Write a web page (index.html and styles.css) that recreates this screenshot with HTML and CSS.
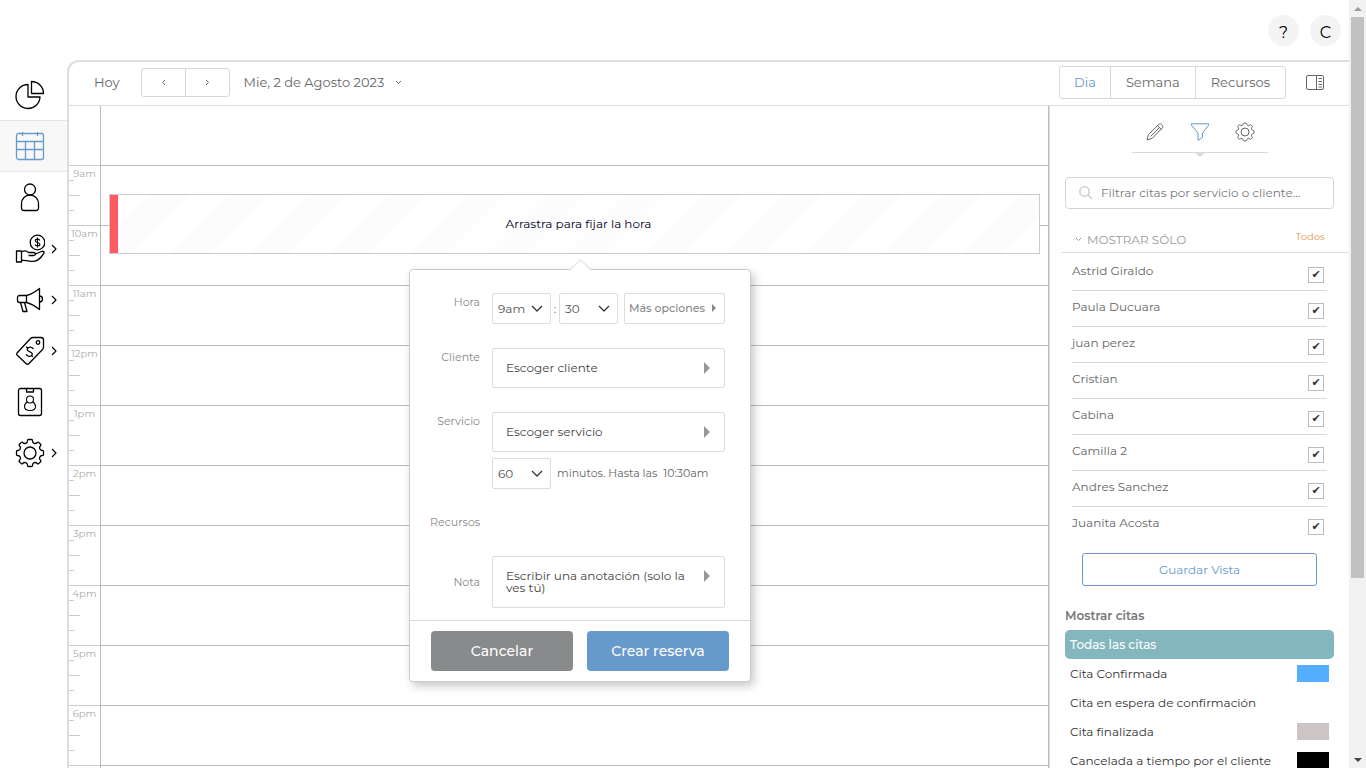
FILE: index.html
```html
<!DOCTYPE html>
<html lang="es">
<head>
<meta charset="utf-8">
<title>Agenda</title>
<link rel="stylesheet" href="styles.css">
</head>
<body>
<div class="app">
  <div class="page">
    <header class="topbar">
      <button class="round" type="button" aria-label="Ayuda">?</button>
      <button class="round" type="button" aria-label="Cuenta">C</button>
    </header>
    <div class="shell">
      <nav class="sidebar" aria-label="Principal">
        <a class="nav-item" href="#" aria-label="Informes"><svg viewBox="0 0 30 30"><path d="M13 4.500A12 12 0 1 0 25 17H13z"/><path d="M16.500 1.500A12 12 0 0 1 28.500 13.500H16.500z"/></svg></a>
        <a class="nav-item active" href="#" aria-label="Agenda"><svg viewBox="0 0 30 30"><rect x="1.500" y="2.500" width="27" height="26" rx="2"/><path d="M1.500 10.500H28.500M1.500 18.500H28.500M10.500 10.500V28M19.500 10.500V28M7.500 1V5M22.500 1V5"/></svg></a>
        <a class="nav-item" href="#" aria-label="Clientes"><svg viewBox="0 0 30 30"><circle cx="15" cy="6.500" r="5.500"/><path d="M6.500 25V20.500a8.500 8.500 0 0 1 17 0V25a2.500 2.500 0 0 1-2.500 2.500H9A2.500 2.500 0 0 1 6.500 25z"/></svg></a>
        <a class="nav-item" href="#" aria-label="Ventas"><svg viewBox="0 0 30 30"><circle cx="22.500" cy="8.500" r="7.300"/><path class="fine" d="M24.800 6.500c-.3-1-1.100-1.400-2.300-1.400-1.300 0-2.200.6-2.200 1.600 0 2.400 4.600 1.200 4.600 3.500 0 1-.9 1.700-2.400 1.700-1.300 0-2.200-.5-2.500-1.500M22.500 3.500v10"/><path d="M1.500 17h5v11H1.500zM6.500 18c2.500-1.500 5-1.500 7 .5h5c2.500 0 2.500 3 0 3h-5M20.500 20l6-2.500c2-.8 3.300.8 2 2.300-3 4.500-5.500 7.500-10.500 7.500-4.500 0-7-1.500-11.500-.8"/></svg><svg class="more" viewBox="0 0 6 10"><path d="M1 1l4 4-4 4"/></svg></a>
        <a class="nav-item" href="#" aria-label="Marketing"><svg viewBox="0 0 30 30"><path d="M11.500 10.500H4.500a2 2 0 0 0-2 2v3a2 2 0 0 0 2 2h7z"/><path d="M11.500 10.500C16 9.500 20 7 24.500 3.500V24.500C20 21 16 18.500 11.500 17.500M24.500 11c4 0 4 6 0 6M5.500 17.500 8 26.500h4L9.500 17.500"/></svg><svg class="more" viewBox="0 0 6 10"><path d="M1 1l4 4-4 4"/></svg></a>
        <a class="nav-item" href="#" aria-label="Promociones"><svg viewBox="0 0 30 30"><path d="M2 17 15.500 2.500Q16.500 1.500 18 1.500H26Q28.500 1.500 28.500 4V11Q28.500 12.500 27.500 13.500L14 27.500Q12.500 29 11 27.500L2 19Q1 18 2 17z"/><circle cx="23" cy="6.500" r="1.800"/><path d="M18.500 13c-1.500-2.500-4.500-2.500-6-.5-2 3 6.500 3.500 4.500 6.500-1.300 2-4.500 1.700-6-.6M11.500 10.500l1 2M16.500 19l1.200 2"/></svg><svg class="more" viewBox="0 0 6 10"><path d="M1 1l4 4-4 4"/></svg></a>
        <a class="nav-item" href="#" aria-label="Personal"><svg viewBox="0 0 30 30"><rect x="3.500" y="1.500" width="23" height="27" rx="2"/><path d="M11.500 2v3h7V2"/><circle class="fine" cx="15" cy="12.500" r="3.500"/><path class="fine" d="M12.500 15a5 5 0 0 0-3 4.500c0 3 2 4 5.500 4s5.500-1 5.500-4a5 5 0 0 0-3-4.500"/></svg></a>
        <a class="nav-item" href="#" aria-label="Ajustes"><svg viewBox="0 0 30 30"><use href="#gear"/></svg><svg class="more" viewBox="0 0 6 10"><path d="M1 1l4 4-4 4"/></svg></a>
      </nav>
      <main class="main">
        <div class="toolbar">
          <button class="plain" type="button">Hoy</button>
          <div class="group arrows">
            <button type="button" aria-label="Anterior"><svg viewBox="0 0 5 7"><path d="M4 1 1.500 3.500 4 6"/></svg></button>
            <button type="button" aria-label="Siguiente"><svg viewBox="0 0 5 7"><path d="M1 1l2.500 2.500L1 6"/></svg></button>
          </div>
          <button class="plain date" type="button">Mie, 2 de Agosto 2023 <svg viewBox="0 0 7 5"><path d="M1 1l2.500 2.500L6 1"/></svg></button>
          <div class="group views">
            <button class="on" type="button">Dia</button>
            <button type="button">Semana</button>
            <button type="button">Recursos</button>
          </div>
          <button class="plain panel-toggle" type="button" aria-label="Panel"><svg viewBox="0 0 18 16"><rect x=".5" y="1.500" width="17" height="14" rx="1.500"/><path d="M10.500 1.500V15.500M12.500 4.500H16M12.500 7.500H16M12.500 10.500H16M12.500 13H16"/></svg></button>
        </div>
        <div class="content">
          <section class="calendar" aria-label="Agenda del día">
            <div class="hours">
              <div class="hour blank"></div>
              <div class="hour">9am</div>
              <div class="hour">10am</div>
              <div class="hour">11am</div>
              <div class="hour">12pm</div>
              <div class="hour">1pm</div>
              <div class="hour">2pm</div>
              <div class="hour">3pm</div>
              <div class="hour">4pm</div>
              <div class="hour">5pm</div>
              <div class="hour">6pm</div>
            </div>
            <div class="slots">
              <div class="event">Arrastra para fijar la hora</div>
              <form class="popover">
                <div class="fields">
                  <label for="hora">Hora</label>
                  <div class="line">
                    <span class="pick"><select id="hora"><option>9am</option></select><svg viewBox="0 0 12 8"><path d="M1 1l5 5 5-5"/></svg></span>
                    <span class="colon">:</span>
                    <span class="pick"><select aria-label="Minutos"><option>30</option></select><svg viewBox="0 0 12 8"><path d="M1 1l5 5 5-5"/></svg></span>
                    <button class="options" type="button">Más opciones <i class="tri"></i></button>
                  </div>
                  <label for="cliente">Cliente</label>
                  <button class="chooser" id="cliente" type="button"><span>Escoger cliente</span><i class="tri big"></i></button>
                  <label for="servicio">Servicio</label>
                  <div class="service">
                    <button class="chooser" id="servicio" type="button"><span>Escoger servicio</span><i class="tri big"></i></button>
                    <div class="line">
                      <span class="pick"><select aria-label="Duración"><option>60</option></select><svg viewBox="0 0 12 8"><path d="M1 1l5 5 5-5"/></svg></span>
                      <span class="until">minutos. Hasta las &nbsp;10:30am</span>
                    </div>
                  </div>
                  <span class="name">Recursos</span>
                  <div></div>
                  <label class="middle" for="nota">Nota</label>
                  <button class="chooser note" id="nota" type="button"><span>Escribir una anotación (solo la ves tú)</span><i class="tri big"></i></button>
                </div>
                <div class="actions">
                  <button class="cancel" type="button">Cancelar</button>
                  <button class="create" type="button">Crear reserva</button>
                </div>
              </form>
            </div>
          </section>
          <aside class="panel">
            <div class="tabs">
              <button type="button" aria-label="Editar"><svg viewBox="0 0 20 20"><path d="M2 18l1.500-5.500L14 2.200c1.500-1.500 5 1.800 3.600 3.500L7.200 16.300zM12.500 3.700l3.700 3.800M5.500 14.500l8.800-8.800"/></svg></button>
              <button class="on" type="button" aria-label="Filtrar"><svg viewBox="0 0 20 20"><path d="M1.500 1.800h17v1.500L12.500 11v4.500L8 18.300V11L1.500 3.300z"/></svg></button>
              <button type="button" aria-label="Configurar"><svg viewBox="0 0 30 30"><use href="#gear"/></svg></button>
            </div>
            <label class="search"><svg viewBox="0 0 14 14"><circle cx="5.500" cy="5.500" r="4.700"/><path d="M9 9l4 4"/></svg><input type="text" aria-label="Filtrar citas" placeholder="Filtrar citas por servicio o cliente..."></label>
            <div class="only">
              <h2><svg viewBox="0 0 7 5"><path d="M1 1l2.500 2.500L6 1"/></svg>MOSTRAR SÓLO</h2>
              <a href="#">Todos</a>
            </div>
            <div class="people">
              <label>Astrid Giraldo<input type="checkbox" checked></label>
              <label>Paula Ducuara<input type="checkbox" checked></label>
              <label>juan perez<input type="checkbox" checked></label>
              <label>Cristian<input type="checkbox" checked></label>
              <label>Cabina<input type="checkbox" checked></label>
              <label>Camilla 2<input type="checkbox" checked></label>
              <label>Andres Sanchez<input type="checkbox" checked></label>
              <label>Juanita Acosta<input type="checkbox" checked></label>
            </div>
            <button class="save" type="button">Guardar Vista</button>
            <h2 class="legend-title">Mostrar citas</h2>
            <ul class="legend">
              <li class="all">Todas las citas</li>
              <li>Cita Confirmada<i class="swatch blue"></i></li>
              <li>Cita en espera de confirmación</li>
              <li>Cita finalizada<i class="swatch gray"></i></li>
              <li>Cancelada a tiempo por el cliente<i class="swatch black"></i></li>
            </ul>
          </aside>
        </div>
      </main>
    </div>
  </div>
  <div class="scrollbar" aria-hidden="true"><i class="up"></i><i class="thumb"></i><i class="down"></i></div>
</div>
<svg class="defs" aria-hidden="true"><symbol id="gear" viewBox="0 0 30 30"><circle cx="15" cy="15" r="6"/><path d="M12.500 2.500Q12.500 1.500 13.500 1.500H16.500Q17.500 1.500 17.500 2.500C17.500 5.300 20.300 6.500 22.300 4.500Q23 3.700 23.700 4.400L25.600 6.300Q26.300 7 25.500 7.700C23.500 9.700 24.700 12.500 27.500 12.500Q28.500 12.500 28.500 13.500V16.500Q28.500 17.500 27.500 17.500C24.700 17.500 23.500 20.300 25.500 22.300Q26.300 23 25.600 23.700L23.700 25.600Q23 26.300 22.300 25.500C20.300 23.500 17.500 24.700 17.500 27.500Q17.500 28.500 16.500 28.500H13.500Q12.500 28.500 12.500 27.500C12.500 24.700 9.700 23.500 7.700 25.500Q7 26.300 6.300 25.600L4.400 23.700Q3.700 23 4.500 22.300C6.500 20.300 5.300 17.500 2.500 17.500Q1.500 17.500 1.500 16.500V13.500Q1.500 12.500 2.500 12.500C5.300 12.500 6.500 9.700 4.500 7.700Q3.700 7 4.400 6.300L6.300 4.400Q7 3.700 7.700 4.500C9.700 6.500 12.500 5.300 12.500 2.500z"/></symbol></svg>
</body>
</html>
```
FILE: styles.css
```css
* { box-sizing: border-box; }
body { margin: 0; font-family: Montserrat, Inter, "Open Sans", sans-serif; font-size: 12px; color: #666; background: #fff; }
button, input, select { font: inherit; color: inherit; margin: 0; }
button { background: #fff; border: 0; padding: 0; }
a { color: inherit; text-decoration: none; }
svg { display: block; fill: none; stroke: currentColor; stroke-linejoin: round; }
.defs { position: absolute; width: 0; height: 0; }

.app { display: flex; height: 100vh; overflow: hidden; }
.page { flex: 1; min-width: 0; display: flex; flex-direction: column; }
.topbar { height: 60px; flex: none; display: flex; justify-content: flex-end; align-items: center; gap: 11px; padding-right: 8px; }
.round { width: 31px; height: 31px; padding-top: 4px; border-radius: 50%; background: #f4f4f4; color: #000; font-size: 16px; }
.shell { flex: 1; min-height: 0; display: flex; }

.sidebar { width: 67px; flex: none; padding-top: 9px; color: #000; }
.nav-item { height: 51px; display: flex; align-items: center; gap: 6px; padding-left: 15px; }
.nav-item svg { width: 30px; height: 30px; stroke-width: 1.3; }
.nav-item svg .fine { stroke-width: 1.1; }
.nav-item svg.more { width: 6px; height: 10px; stroke-width: 1.1; }
.nav-item.active { height: 52px; color: #6699cc; background: #f8f8f8; border-top: 1px solid #e6e6e6; border-bottom: 1px solid #e6e6e6; }

.main { flex: 1; min-width: 0; display: flex; flex-direction: column; border-top: 2px solid #ddd; border-left: 2px solid #ddd; border-top-left-radius: 12px; }
.toolbar { height: 44px; flex: none; display: flex; align-items: center; padding: 0 25px 3px; border-bottom: 1px solid #ddd; font-size: 13px; }
.plain { background: none; }
.group { display: flex; border: 1px solid #d8d8d8; border-radius: 3px; }
.group button { display: grid; place-items: center; background: none; }
.group button + button { border-left: 1px solid #d8d8d8; }
.arrows { height: 29px; margin: 0 14px 0 21px; }
.arrows button { width: 43px; }
.arrows button + button { width: 44px; }
.arrows svg { width: 5px; height: 7px; }
.date { display: flex; align-items: center; gap: 11px; }
.date svg { width: 7px; height: 5px; }
.views { height: 33px; margin-left: auto; }
.views button { padding: 0 15px; }
.views .on { padding: 0 14px; color: #6699cc; }
.panel-toggle { margin-left: 20px; }
.panel-toggle svg { width: 18px; height: 16px; }

.content { flex: 1; min-height: 0; display: flex; }
.calendar { flex: 1; min-width: 0; display: flex; overflow: hidden; }
.hours { width: 32px; flex: none; border-right: 1px solid #bbb; font-size: 10px; color: #aaa; text-align: center; }
.hour { height: 60px; padding-top: 2px; line-height: 12px; border-bottom: 1px solid #ccc;
  background: linear-gradient(#ccc, #ccc) 0 14px / 5px 1px, linear-gradient(#ccc, #ccc) 0 29px / 11px 1px, linear-gradient(#ccc, #ccc) 0 44px / 5px 1px; background-repeat: no-repeat; }
.hour.blank { background: none; }
.slots { flex: 1; position: relative; background: repeating-linear-gradient(#fff 0 59px, #bbb 59px 60px); }
.event { position: absolute; top: 88px; left: 8px; right: 8px; height: 60px; display: grid; place-items: center; padding: 0 0 2px 8px; color: #002; border: 1px solid #ccc;
  background: linear-gradient(#ff5a5f, #ff5a5f) 0 0 / 8px 100% no-repeat, repeating-linear-gradient(135deg, #fff 0 28px, #fcfcfc 28px 56px); }

.popover { position: absolute; top: 163px; left: 308px; width: 342px; background: #fff; border: 1px solid #ccc; border-radius: 4px; box-shadow: 3px 4px 10px rgba(0, 0, 0, .22); }
.popover::before { content: ""; position: absolute; top: -8px; left: 163px; width: 14px; height: 14px; background: #fff; border: 1px solid #ddd; border-width: 1px 0 0 1px; transform: rotate(45deg); }
.fields { position: relative; display: grid; grid-template-columns: 50px 1fr; column-gap: 12px; row-gap: 24px; padding: 23px 25px 12px 20px; }
.fields label, .name { font-size: 11px; line-height: 18px; color: #888; text-align: right; white-space: nowrap; }
.fields .middle { align-self: center; }
.line { display: flex; align-items: center; }
.pick { display: grid; align-items: center; width: 59px; }
.pick > * { grid-area: 1 / 1; }
.pick select { appearance: none; width: 100%; height: 31px; padding: 0 5px; border: 1px solid #ddd; border-radius: 2px; background: #fff; color: #555; }
.pick svg { width: 12px; height: 8px; justify-self: end; margin-right: 8px; stroke-width: 1.3; pointer-events: none; color: #333; }
.colon { width: 8px; text-align: center; }
.options { width: 101px; height: 31px; margin-left: auto; padding: 0 8px 2px 4px; display: flex; align-items: center; justify-content: space-between; border: 1px solid #ddd; border-radius: 2px; font-size: 11px; font-weight: 500; color: #888; white-space: nowrap; }
.tri { width: 0; height: 0; border: 4px solid transparent; border-left: 4px solid #888; border-right: 0; }
.tri.big { border-width: 6px; border-left-color: #999; border-right: 0; }
.chooser { display: flex; justify-content: space-between; align-items: center; width: 100%; min-height: 40px; padding: 0 14px 0 13px; border: 1px solid #ddd; border-radius: 2px; color: #444; text-align: left; line-height: 12px; }
.note { min-height: 52px; align-items: flex-start; padding-top: 13px; }
.note span { width: 184px; }
.service { display: grid; gap: 6px; }
.until { margin-left: 6px; padding-bottom: 2px; font-size: 11px; white-space: nowrap; }
.name { height: 19px; }
.actions { display: flex; gap: 14px; padding: 10px 21px 10px; border-top: 1px solid #ddd; }
.actions button { flex: 1; height: 40px; border-radius: 4px; color: #fff; font-size: 14px; font-weight: 500; }
.actions .cancel { background: #888a8b; }
.actions .create { background: #6699cc; }

.panel { width: 301px; flex: none; padding: 12px 15px 0; border-left: 1px solid #bbb; box-shadow: inset 1px 0 #ddd; overflow: hidden; }
.tabs { position: relative; display: flex; justify-content: center; gap: 25px; width: 136px; margin: 0 auto 24px 68px; padding: 4px 0 10px; border-bottom: 1px solid #d8d8d8; }
.tabs::after { content: ""; position: absolute; top: 100%; left: 62px; border: 6px solid transparent; border-top: 5px solid #d8d8d8; border-bottom: 0; }
.tabs svg { width: 20px; height: 20px; }
.tabs svg[viewBox="0 0 30 30"] { stroke-width: 1.5; }
.tabs .on { color: #5b9bd5; }
.search { display: flex; align-items: center; gap: 8px; height: 32px; margin-left: 1px; padding: 0 13px; border: 1px solid #d4d4d4; border-radius: 4px; }
.search svg { width: 14px; height: 14px; flex: none; color: #ccc; stroke-width: 1.5; }
.search input { flex: 1; min-width: 0; border: 0; padding: 0 0 2px; outline: 0; background: none; }
.search input::placeholder { color: #777; opacity: 1; }
.only { display: flex; justify-content: space-between; margin: 19px -15px 0 -2px; padding: 0 24px 0 13px; height: 25px; border-bottom: 1px solid #ddd; }
.only h2 { display: flex; align-items: center; gap: 5px; margin: 0; padding-bottom: 2px; font-size: 12px; font-weight: 400; color: #999; }
.only svg { width: 7px; height: 5px; }
.only a { font-size: 10px; line-height: 18px; color: #e39b4b; }
.people { padding: 2px 7px 0 8px; }
.people label { display: flex; justify-content: space-between; height: 36px; padding: 8px 3px 0 0; line-height: 16px; border-bottom: 1px solid #d8d8d8; }
.people label:last-child { border: 0; }
.people input { appearance: none; width: 16px; height: 16px; margin: 4px 0 0; border: 1px solid #bbb; display: grid; place-items: center; }
.people input:checked::before { content: "✔"; font: 11px/14px "DejaVu Sans", sans-serif; color: #333; }
.save { display: block; width: calc(100% - 35px); height: 33px; margin: 10px auto 0 18px; border: 1px solid #6699cc; border-radius: 3px; color: #6699cc; }
.legend-title { margin: 22px 0 6px 1px; font-size: 12px; line-height: 16px; font-weight: 600; color: #777; }
.legend { list-style: none; margin: 0 0 0 1px; padding: 0; color: #333; }
.legend li { display: flex; justify-content: space-between; align-items: center; height: 29px; padding: 0 5px; white-space: nowrap; }
.legend .all { background: #84b6bd; color: #fff; font-weight: 500; border-radius: 5px; }
.swatch { width: 32px; height: 17px; }
.blue { background: #54aeff; }
.gray { background: #cbc5c5; }
.black { background: #000; }

.scrollbar { width: 17px; flex: none; display: flex; flex-direction: column; align-items: center; background: #f1f1f1; }
.up { margin: 7px 0 6px; border: 4px solid transparent; border-bottom-color: #999; border-top: 0; }
.thumb { width: 13px; height: 73%; background: #c1c1c1; }
.down { margin: auto 0 6px; border: 4px solid transparent; border-top-color: #444; border-bottom: 0; }
```
